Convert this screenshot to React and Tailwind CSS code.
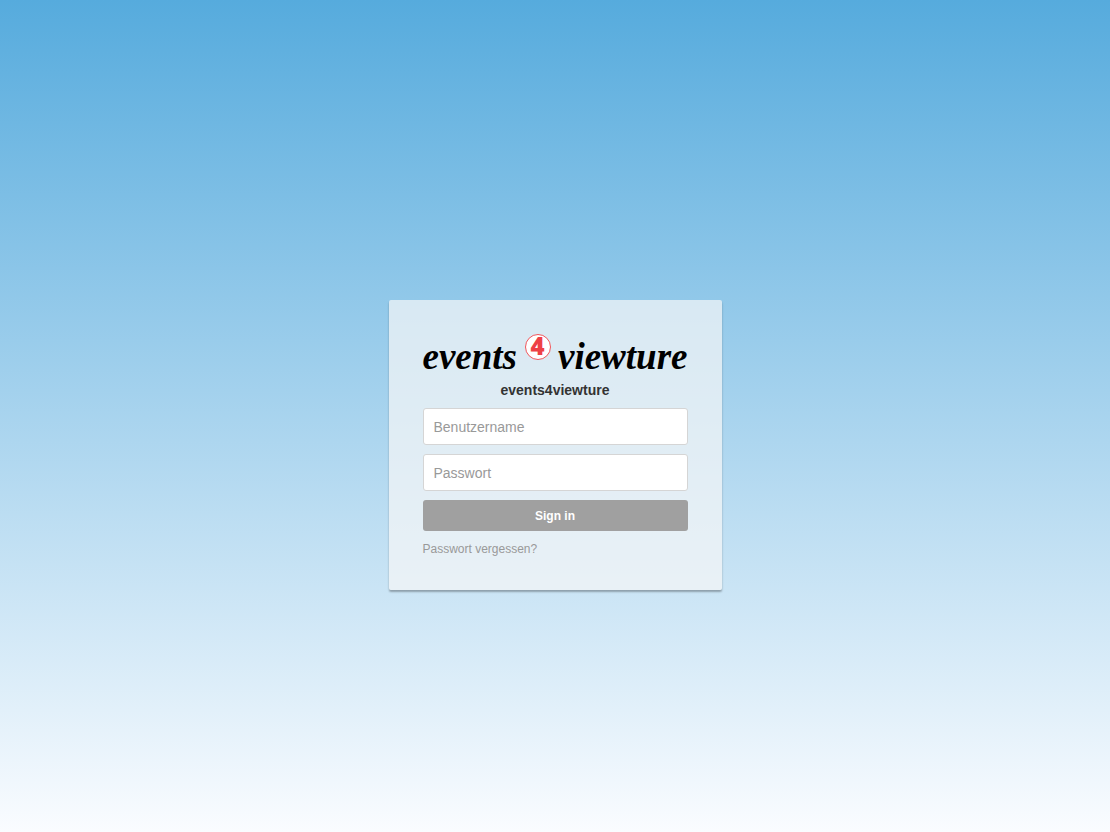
function Logo() {
  return (
    <div className="flex h-[38px] w-full items-start justify-between font-['Liberation_Serif',serif] text-[37px] leading-[46px] font-bold text-black">
      <span className="italic">events</span>
      <span className="flex size-[26px] shrink-0 items-start justify-center rounded-full border border-[#f0565b] bg-white font-['Noto_Sans',sans-serif] text-[24px] leading-[22px] font-black text-[#ee4146]">
        4
      </span>
      <span className="italic">viewture</span>
    </div>
  );
}

function Field({ id, label, type, autoComplete }) {
  return (
    <input
      id={id}
      name={id}
      type={type}
      aria-label={label}
      placeholder={label}
      autoComplete={autoComplete}
      className="block h-[37px] w-full rounded-[3px] border border-[#d5d5d5] bg-white px-[10px] text-sm text-[#333] outline-none placeholder:text-[#999] focus:border-[#59aedd]"
    />
  );
}

export default function App() {
  return (
    <main className="flex min-h-screen items-center justify-center bg-linear-to-b/srgb from-[#56abdd] to-[#fafcff] pt-[58px] font-['Liberation_Sans',Arial,sans-serif]">
      <form
        onSubmit={(e) => e.preventDefault()}
        className="w-full max-w-[333px] rounded-[2px] bg-[#f6f6f6]/70 px-[34px] pt-[34px] pb-[31px] shadow-[0_2px_2px_rgba(0,0,0,0.3)]"
      >
        <Logo />
        <h1 className="mt-2 text-center text-sm leading-5 font-bold text-[#333]">events4viewture</h1>
        <div className="mt-2 flex flex-col gap-[9px]">
          <Field id="username" label="Benutzername" type="text" autoComplete="username" />
          <Field id="password" label="Passwort" type="password" autoComplete="current-password" />
          <button type="submit" className="h-[31px] w-full rounded-[3px] bg-[#a0a0a0] text-xs font-bold text-white">
            Sign in
          </button>
        </div>
        <a href="#reset" className="mt-2 block text-xs leading-5 text-[#999]">
          Passwort vergessen?
        </a>
      </form>
    </main>
  );
}
